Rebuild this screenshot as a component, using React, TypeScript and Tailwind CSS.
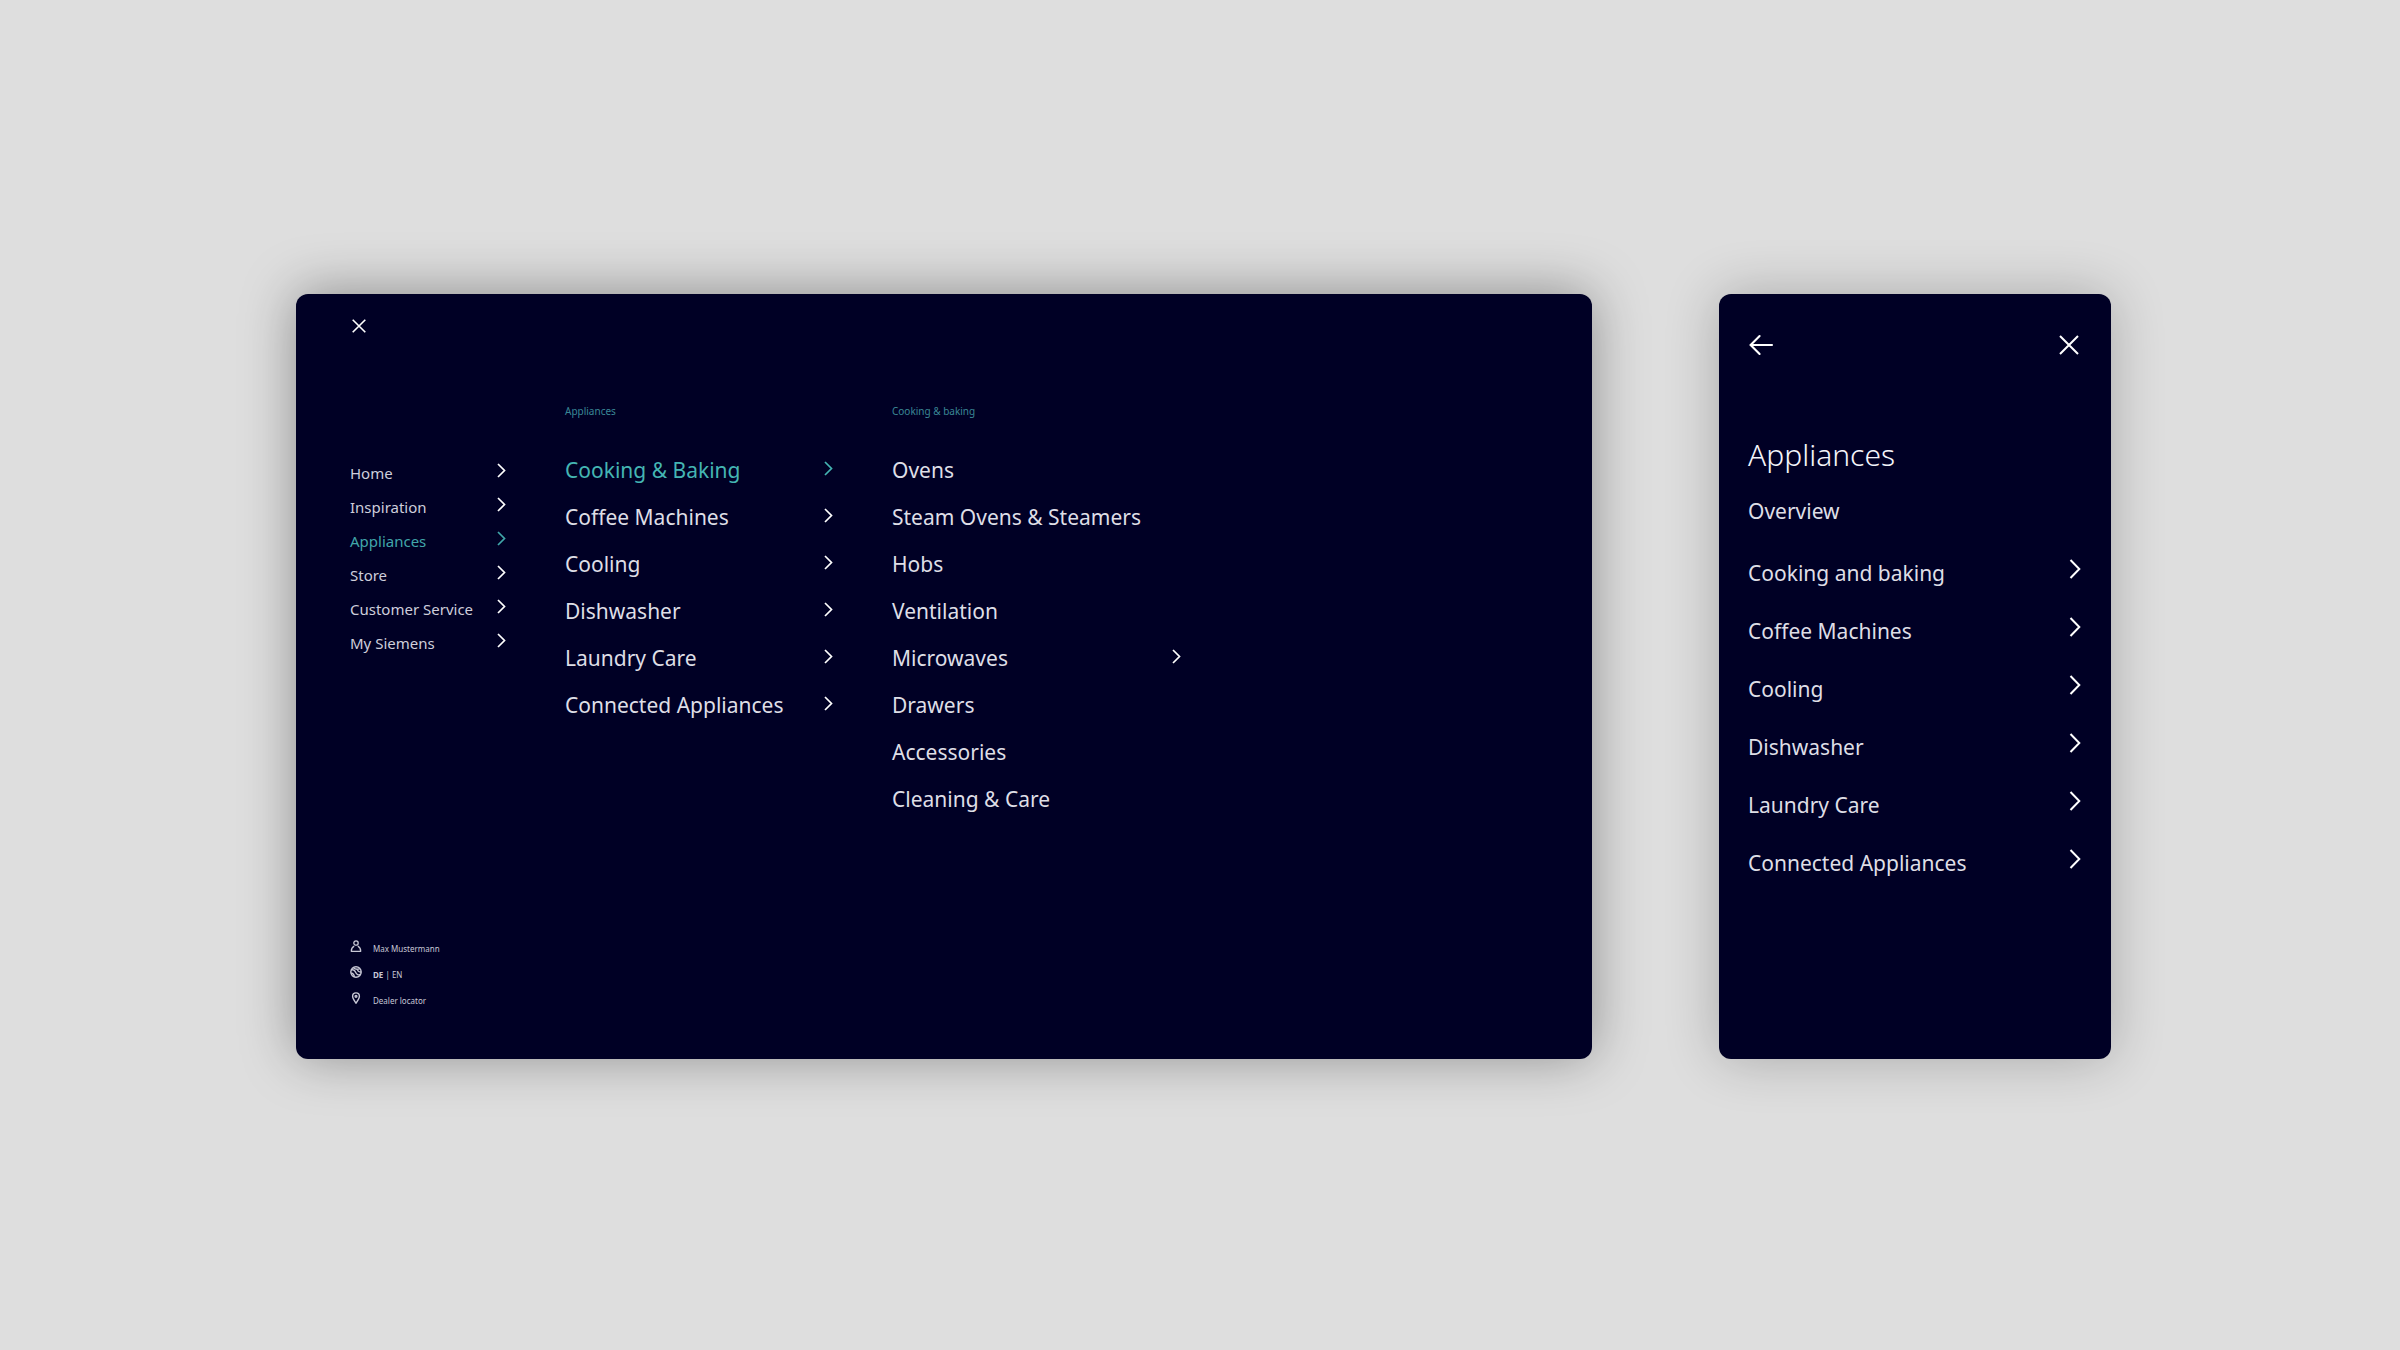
import React from "react";

type Item = { label: string; arrow?: boolean; active?: boolean };

const mainItems: Item[] = [
  { label: "Home", arrow: true },
  { label: "Inspiration", arrow: true },
  { label: "Appliances", arrow: true, active: true },
  { label: "Store", arrow: true },
  { label: "Customer Service", arrow: true },
  { label: "My Siemens", arrow: true },
];

const applianceItems: Item[] = [
  { label: "Cooking & Baking", arrow: true, active: true },
  { label: "Coffee Machines", arrow: true },
  { label: "Cooling", arrow: true },
  { label: "Dishwasher", arrow: true },
  { label: "Laundry Care", arrow: true },
  { label: "Connected Appliances", arrow: true },
];

const cookingItems: Item[] = [
  { label: "Ovens" },
  { label: "Steam Ovens & Steamers" },
  { label: "Hobs" },
  { label: "Ventilation" },
  { label: "Microwaves", arrow: true },
  { label: "Drawers" },
  { label: "Accessories" },
  { label: "Cleaning & Care" },
];

const mobileItems = [
  "Cooking and baking",
  "Coffee Machines",
  "Cooling",
  "Dishwasher",
  "Laundry Care",
  "Connected Appliances",
];

function Chevron({ className }: { className: string }) {
  return (
    <svg viewBox="0 0 9 15" fill="none" stroke="currentColor" strokeWidth="1.7" className={className} aria-hidden="true">
      <path d="M1 1 7.5 7.5 1 14" />
    </svg>
  );
}

function LargeChevron() {
  return (
    <svg viewBox="0 0 12 20" fill="none" stroke="currentColor" strokeWidth="2" className="mb-2.5 h-5 w-3 text-white" aria-hidden="true">
      <path d="M1.5 1 10.3 10 1.5 19" />
    </svg>
  );
}

function Cross({ className }: { className: string }) {
  return (
    <svg viewBox="0 0 20 20" fill="none" stroke="currentColor" className={className} aria-hidden="true">
      <path d="M1 1 19 19M19 1 1 19" />
    </svg>
  );
}

function BackArrow() {
  return (
    <svg viewBox="0 0 26 24" fill="none" stroke="currentColor" strokeWidth="2.1" strokeLinecap="round" className="h-6 w-[26px]" aria-hidden="true">
      <path d="M24 12H2.6M11.6 3 2.6 12l9 9" />
    </svg>
  );
}

function PersonIcon() {
  return (
    <svg viewBox="0 0 12 12" fill="none" stroke="currentColor" strokeWidth="1.3" className="size-3" aria-hidden="true">
      <circle cx="6" cy="3" r="2.2" />
      <path d="M4.2 6.2C2.4 7 1.3 8.7 1.3 11.3H10.7C10.7 8.7 9.6 7 7.8 6.2" strokeLinejoin="round" />
    </svg>
  );
}

function GlobeIcon() {
  return (
    <svg viewBox="0 0 12 12" fill="none" stroke="currentColor" strokeWidth="1.4" className="size-3" aria-hidden="true">
      <circle cx="6" cy="6" r="5.2" />
      <path d="M1.2 4.2C3 3 4.8 4.3 5.6 6.3S8.6 9.6 10.6 8.4M3.4 1.7C4.8 3 7.2 3.8 9.8 2.6M7.9 3.2C7.2 4.4 8.4 6.2 11 6M1.2 7.4C2.6 7 4 8 4.4 10.8" />
    </svg>
  );
}

function PinIcon() {
  return (
    <svg viewBox="0 0 12 12" fill="none" stroke="currentColor" strokeWidth="1.4" className="size-3" aria-hidden="true">
      <path d="M6 11.2C4.3 8.7 2.6 6.5 2.6 4.3a3.4 3.4 0 0 1 6.8 0C9.4 6.500 7.7 8.7 6 11.2Z" />
      <circle cx="6" cy="4.3" r="0.9" />
    </svg>
  );
}

function MenuColumn({ title, items }: { title: string; items: Item[] }) {
  return (
    <section>
      <h2 className="text-[10px] leading-4 text-[#3a8795]">{title}</h2>
      <ul className="mt-7">
        {items.map((item) => (
          <li key={item.label}>
            <a
              href="#"
              className={`flex h-[47px] items-center justify-between text-[21px] ${
                item.active ? "text-[#44b5b3]" : "text-[#dedee6]"
              }`}
            >
              {item.label}
              {item.arrow && (
                <Chevron className={item.active ? "mb-1 h-[15px] w-[9px]" : "mb-1 h-[15px] w-[9px] text-white"} />
              )}
            </a>
          </li>
        ))}
      </ul>
    </section>
  );
}

function DesktopMenu() {
  return (
    <nav
      aria-label="Desktop menu"
      className="flex min-h-[765px] flex-1 flex-col rounded-xl bg-[#000025] pt-[23px] pb-[45px] pl-[54px] shadow-[0_-2px_54px_rgba(0,0,0,0.36)]"
    >
      <button type="button" aria-label="Close menu" className="grid size-[18px] place-items-center text-white">
        <Cross className="size-3.5 stroke-[2.3]" />
      </button>

      <div className="mt-[68px] grid grid-cols-[156px_268px_289px] gap-x-[59px]">
        <ul className="pt-[53px]">
          {mainItems.map((item) => (
            <li key={item.label}>
              <a
                href="#"
                className={`flex h-[34px] items-center justify-between text-[15px] ${
                  item.active ? "text-[#40a6aa]" : "text-[#cecedb]"
                }`}
              >
                {item.label}
                <Chevron className={item.active ? "mb-1.5 h-[15px] w-[9px]" : "mb-1.5 h-[15px] w-[9px] text-white"} />
              </a>
            </li>
          ))}
        </ul>
        <MenuColumn title="Appliances" items={applianceItems} />
        <MenuColumn title="Cooking & baking" items={cookingItems} />
      </div>

      <ul className="mt-auto text-[8px] text-[#c8c8d6]">
        <li>
          <a href="#" className="flex h-[26px] items-center gap-[11px]">
            <span className="mb-1.5">
              <PersonIcon />
            </span>
            Max Mustermann
          </a>
        </li>
        <li className="flex h-[26px] items-center gap-[11px]">
          <span className="mb-1.5">
            <GlobeIcon />
          </span>
          <span>
            <button type="button" className="font-bold">
              DE
            </button>
            {" | "}
            <button type="button">EN</button>
          </span>
        </li>
        <li>
          <a href="#" className="flex h-[26px] items-center gap-[11px]">
            <span className="mb-1.5">
              <PinIcon />
            </span>
            Dealer locator
          </a>
        </li>
      </ul>
    </nav>
  );
}

function MobileMenu() {
  return (
    <nav
      aria-label="Mobile menu"
      className="w-[392px] shrink-0 rounded-xl bg-[#000025] pt-[39px] pr-[30px] pb-11 pl-[29px] shadow-[0_0_54px_rgba(0,0,0,0.24)]"
    >
      <div className="flex items-center justify-between text-white">
        <button type="button" aria-label="Back">
          <BackArrow />
        </button>
        <button type="button" aria-label="Close" className="grid size-6 place-items-center">
          <Cross className="size-5 stroke-2" />
        </button>
      </div>
      <h1 className="mt-[78px] text-[30px] leading-10 font-light text-[#f4f4fa]">Appliances</h1>
      <a href="#" className="mt-2 flex h-[58px] items-center text-[21px] text-[#dedee6]">
        Overview
      </a>
      <ul className="mt-1">
        {mobileItems.map((label) => (
          <li key={label}>
            <a href="#" className="flex h-[58px] items-center justify-between text-[21px] text-[#dedee6]">
              {label}
              <LargeChevron />
            </a>
          </li>
        ))}
      </ul>
    </nav>
  );
}

export default function App() {
  return (
    <main className="flex min-h-screen items-start bg-[#dedede] pt-[294px] pr-[289px] pb-16 pl-[296px] font-['Noto_Sans',sans-serif]">
      <div className="flex flex-1 items-stretch gap-[127px]">
        <DesktopMenu />
        <MobileMenu />
      </div>
    </main>
  );
}
